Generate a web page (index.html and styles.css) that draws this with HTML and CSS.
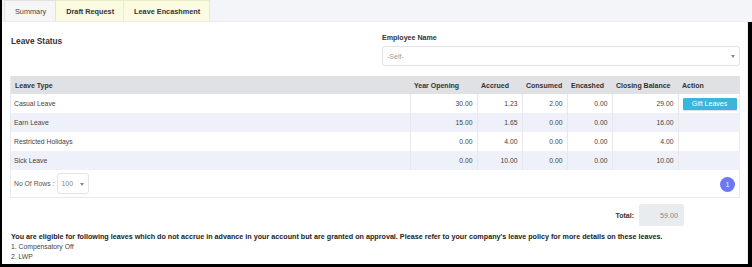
FILE: index.html
```html
<!DOCTYPE html>
<html lang="en">
<head>
  <meta charset="UTF-8">
  <meta name="viewport" content="width=device-width, initial-scale=1.0">
  <title>Leave Summary</title>
  <link rel="stylesheet" href="styles.css">
</head>
<body>
  <div class="frame">
    <div class="tabs">
      <a class="tab active">Summary</a>
      <a class="tab">Draft Request</a>
      <a class="tab">Leave Encashment</a>
    </div>
    <div class="panel">
      <div class="top-row">
        <h2>Leave Status</h2>
        <div class="emp">
          <label>Employee Name</label>
          <div class="select">-Self-<span class="caret"></span></div>
        </div>
      </div>

      <div class="grid-box">
        <table class="leave-table">
          <colgroup>
            <col style="width:399px">
            <col style="width:67px">
            <col style="width:45px">
            <col style="width:45px">
            <col style="width:45px">
            <col style="width:66px">
            <col style="width:62px">
          </colgroup>
          <thead>
            <tr>
              <th>Leave Type</th>
              <th>Year Opening</th>
              <th>Accrued</th>
              <th>Consumed</th>
              <th>Encashed</th>
              <th>Closing Balance</th>
              <th>Action</th>
            </tr>
          </thead>
          <tbody>
            <tr>
              <td>Casual Leave</td>
              <td class="num">30.00</td>
              <td class="num">1.23</td>
              <td class="num">2.00</td>
              <td class="num">0.00</td>
              <td class="num">29.00</td>
              <td><button class="gift-btn">Gift Leaves</button></td>
            </tr>
            <tr>
              <td>Earn Leave</td>
              <td class="num">15.00</td>
              <td class="num">1.65</td>
              <td class="num">0.00</td>
              <td class="num">0.00</td>
              <td class="num">16.00</td>
              <td></td>
            </tr>
            <tr>
              <td>Restricted Holidays</td>
              <td class="num">0.00</td>
              <td class="num">4.00</td>
              <td class="num">0.00</td>
              <td class="num">0.00</td>
              <td class="num">4.00</td>
              <td></td>
            </tr>
            <tr>
              <td>Sick Leave</td>
              <td class="num">0.00</td>
              <td class="num">10.00</td>
              <td class="num">0.00</td>
              <td class="num">0.00</td>
              <td class="num">10.00</td>
              <td></td>
            </tr>
          </tbody>
        </table>
        <div class="grid-foot">
          <span class="rows-label">No Of Rows :</span>
          <div class="rows-select">100<span class="caret"></span></div>
          <span class="page-dot">1</span>
        </div>
      </div>

      <div class="total-row">
        <span class="total-label">Total:</span>
        <div class="total-box">59.00</div>
      </div>

      <p class="notice">You are eligible for following leaves which do not accrue in advance in your account but are granted on approval. Please refer to your company's leave policy for more details on these leaves.</p>
      <ol class="extra-leaves">
        <li>Compensatory Off</li>
        <li>LWP</li>
      </ol>
    </div>
  </div>
</body>
</html>
```

FILE: styles.css
```css
html, body {
  margin: 0;
  padding: 0;
  height: 100%;
  overflow: hidden;
}
body {
  background: #000;
  font-family: 'Liberation Sans', Arial, sans-serif;
  color: #444;
  font-size: 6.8px;
}
.frame {
  margin: 0 4px 0 2px;
  height: 264px;
  display: flex;
  flex-direction: column;
}

/* --- tabs --- */
.tabs {
  display: flex;
  height: 22px;
  padding-left: 2px;
  margin-right: -4px;
  background: #f3f5f9;
  border-bottom: 1px solid #eceef2;
  box-sizing: border-box;
}
.tab {
  display: flex;
  align-items: center;
  padding: 0 9px 0 10px;
  font-size: 7.3px;
  font-weight: bold;
  color: #333;
  background: #fbfbe1;
  border: 1px solid #ececc8;
  border-bottom: none;
  border-left: none;
}
.tab.active {
  font-weight: normal;
  color: #444;
  background: #f6f6f6;
  border-left: 1px solid #e2e2e2;
  border-color: #e2e2e2;
}

/* --- panel --- */
.panel {
  flex: 1;
  background: #fff;
  border-right: 1px solid #e9edf3;
  padding: 0 7px 0 9px;
}
.top-row {
  display: grid;
  grid-template-columns: 1fr 358px;
  padding-top: 12px;
}
.top-row h2 {
  margin: 2px 0 0;
  font-size: 8.3px;
  line-height: 10px;
  color: #333;
}
.emp label {
  display: block;
  font-size: 7.1px;
  font-weight: bold;
  line-height: 9px;
  color: #333;
  margin-bottom: 3px;
}
.select {
  position: relative;
  height: 20px;
  box-sizing: border-box;
  border: 1px solid #dfe3e8;
  border-radius: 3px;
  padding-left: 4px;
  display: flex;
  align-items: center;
  color: #999;
  font-size: 7px;
}
.caret {
  position: absolute;
  right: 4px;
  top: 50%;
  margin-top: -1px;
  border-left: 2.5px solid transparent;
  border-right: 2.5px solid transparent;
  border-top: 3px solid #888;
}

/* --- table --- */
.grid-box {
  margin-top: 10px;
  border: 1px solid #e8eaee;
  border-top: none;
  width: 730px;
  box-sizing: border-box;
  margin-left: -1px;
}
.leave-table {
  width: 729px;
  border-collapse: collapse;
  table-layout: fixed;
}
.leave-table th {
  background: #dfe1e5;
  height: 18px;
  padding: 0 4px;
  text-align: left;
  font-size: 7px;
  font-weight: bold;
  color: #333;
  white-space: nowrap;
}
.leave-table td {
  height: 19px;
  padding: 0 4px;
  border-right: 1px solid #e6e8ec;
  color: #444;
  white-space: nowrap;
}
.leave-table td:first-child {
  padding-left: 3px;
}
.leave-table td:last-child {
  border-right: none;
}
.leave-table tbody tr:nth-child(even) td {
  background: #eef1f9;
}
.leave-table td.num {
  text-align: right;
}
.gift-btn {
  display: block;
  width: 54px;
  height: 12px;
  padding: 0;
  border: none;
  border-radius: 1px;
  background: #3cb5da;
  color: #fff;
  font-family: inherit;
  font-size: 7px;
  box-shadow: 0 1px 1px #0002;
}
.grid-foot {
  height: 27px;
  display: flex;
  align-items: center;
  padding: 0 4px 0 3px;
  color: #555;
}
.rows-label {
  margin-right: 3px;
}
.rows-select {
  position: relative;
  width: 32px;
  height: 21px;
  box-sizing: border-box;
  border: 1px solid #e2e4e8;
  border-radius: 3px;
  padding-left: 3px;
  display: flex;
  align-items: center;
  color: #888;
  font-size: 7px;
}
.page-dot {
  margin-left: auto;
  margin-top: 1px;
  width: 15px;
  height: 15px;
  border-radius: 50%;
  background: #6b79f2;
  color: #fff;
  font-size: 6.5px;
  display: flex;
  align-items: center;
  justify-content: center;
}

/* --- totals and notes --- */
.total-row {
  display: flex;
  justify-content: flex-end;
  align-items: center;
  gap: 5px;
  margin-top: 6px;
  padding-right: 56px;
}
.total-label {
  font-weight: bold;
  font-size: 7px;
  color: #333;
}
.total-box {
  width: 45px;
  height: 22px;
  box-sizing: border-box;
  background: #e9ecef;
  border-radius: 2px;
  display: flex;
  align-items: center;
  justify-content: flex-end;
  padding-right: 6px;
  color: #888;
  font-size: 7.2px;
}
.notice {
  margin: 6px 0 0;
  font-weight: bold;
  font-size: 7.2px;
  line-height: 10px;
  color: #222;
  white-space: nowrap;
}
.extra-leaves {
  margin: 0;
  padding: 0;
  list-style-position: inside;
  line-height: 10px;
  color: #444;
}
```
